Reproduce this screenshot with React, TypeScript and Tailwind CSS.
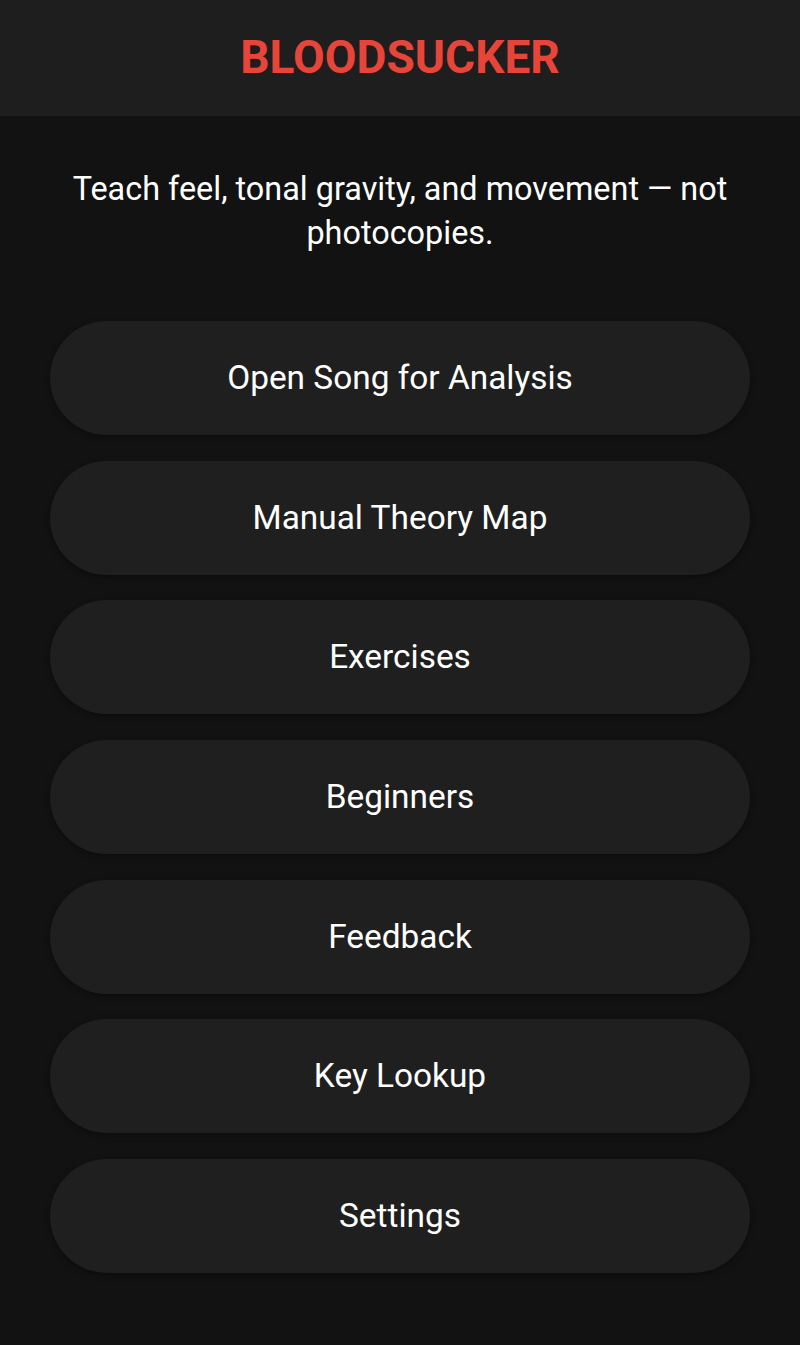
const items = [
  "Open Song for Analysis",
  "Manual Theory Map",
  "Exercises",
  "Beginners",
  "Feedback",
  "Key Lookup",
  "Settings",
];

export default function App() {
  return (
    <div className="min-h-[1345px] bg-[#121212] font-['Roboto',sans-serif] text-white">
      <header className="h-[116px] bg-[#1e1e1e] flex items-center justify-center">
        <h1 className="text-[46px] font-bold text-[#e8453a] -mt-[2px]">BLOODSUCKER</h1>
      </header>
      <main className="px-[50px] pt-[51px]">
        <p className="text-center text-[32.4px] leading-[44px]">
          Teach feel, tonal gravity, and movement — not photocopies.
        </p>
        <nav className="mt-[66px] flex flex-col gap-[25.67px]">
          {items.map((label) => (
            <button
              key={label}
              className="h-[114px] rounded-full bg-[#1f1f1f] text-[33.4px] text-white shadow-[0_2px_6px_rgba(0,0,0,0.35)]"
            >
              {label}
            </button>
          ))}
        </nav>
      </main>
    </div>
  );
}
